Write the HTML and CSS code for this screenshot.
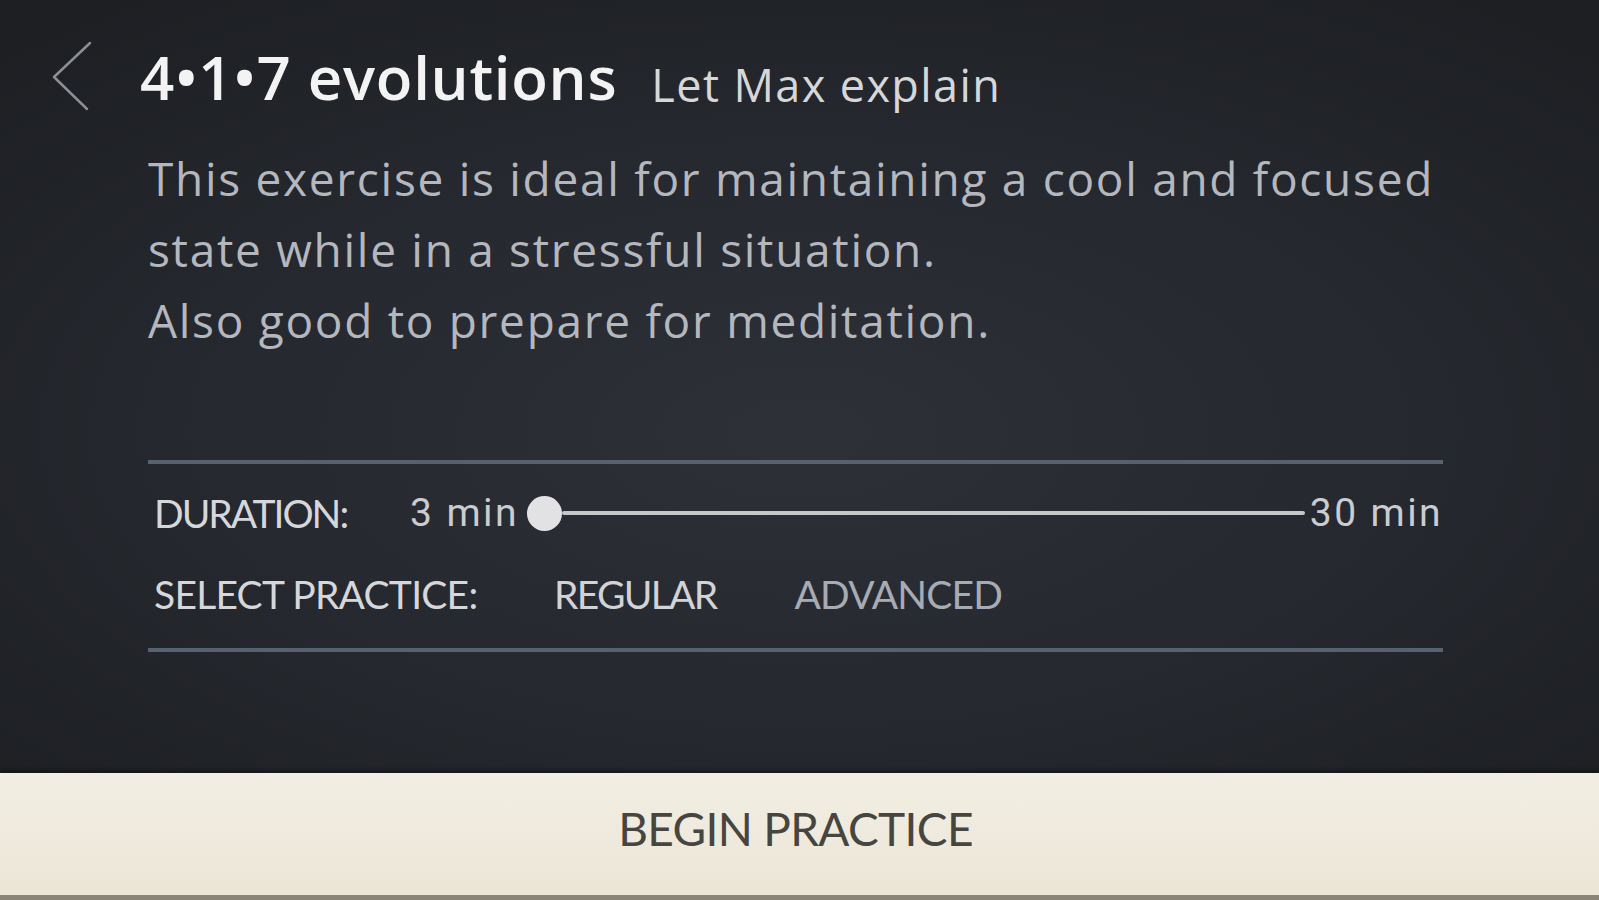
FILE: index.html
```html
<!DOCTYPE html>
<html lang="en">
<head>
<meta charset="utf-8">
<title>4•1•7 evolutions</title>
<link rel="stylesheet" href="styles.css">
</head>
<body>
<div class="screen">
  <header class="header">
    <svg class="back" viewBox="0 0 40 70" width="40" height="70" aria-label="Back">
      <polyline points="38,2 2,36 35,68" fill="none" stroke="#8b8e95" stroke-width="2.5" stroke-linecap="round" stroke-linejoin="round"/>
    </svg>
    <div class="titles">
      <h1 class="title">4•1•7 evolutions</h1>
      <span class="subtitle">Let Max explain</span>
    </div>
  </header>
  <main class="content">
    <p class="desc">This exercise is ideal for maintaining a cool and focused<br>state while in a stressful situation.<br>Also good to prepare for meditation.</p>
    <section class="settings">
      <div class="row">
        <span class="label label-duration">DURATION:</span>
        <span class="num">3 min</span>
        <div class="slider"><span class="knob"></span><span class="track"></span></div>
        <span class="num num-end">30 min</span>
      </div>
      <div class="row row-practice">
        <span class="label label-practice">SELECT PRACTICE:</span>
        <span class="opt opt-active">REGULAR</span>
        <span class="opt">ADVANCED</span>
      </div>
    </section>
  </main>
  <button class="begin"><span class="begin-text">BEGIN PRACTICE</span></button>
</div>
</body>
</html>
```

FILE: styles.css
```css
html, body {
  margin: 0;
  padding: 0;
}
body {
  width: 1599px;
  height: 900px;
  overflow: hidden;
  background: radial-gradient(ellipse 70% 60% at 50% 48%, #2d3037 0%, #25282e 55%, #1d1f23 100%);
  font-family: "Open Sans", "Liberation Sans", sans-serif;
}
.screen {
  height: 900px;
  display: flex;
  flex-direction: column;
}
.header {
  display: flex;
  align-items: flex-start;
  padding: 47px 0 0 52px;
  height: 60px;
}
.back {
  display: block;
  margin-top: -6px;
  flex: 0 0 auto;
}
.titles {
  display: flex;
  align-items: baseline;
  margin-left: 48px;
}
.title {
  margin: 0;
  font-family: "Open Sans", sans-serif;
  font-weight: 600;
  font-size: 60px;
  line-height: 60px;
  color: #f3f3f4;
  letter-spacing: 0.7px;
}
.subtitle {
  margin-left: 34px;
  font-family: "Open Sans", sans-serif;
  font-size: 45px;
  line-height: 60px;
  color: #d6d7d9;
  letter-spacing: 1.4px;
  position: relative;
  top: 2px;
}
.content {
  padding-left: 148px;
  width: 1295px;
}
.desc {
  margin: 36px 0 0 0;
  font-family: "Open Sans", sans-serif;
  font-size: 46px;
  line-height: 71px;
  color: #b4b7be;
  letter-spacing: 1.7px;
}
.settings {
  margin-top: 104px;
  border-top: 4px solid #58616f;
  border-bottom: 4px solid #58616f;
  padding: 29px 0 34px 6px;
  display: flex;
  flex-direction: column;
  gap: 41px;
}
.row {
  display: flex;
  align-items: center;
  height: 40px;
}
.label {
  font-family: "Lato", sans-serif;
  font-size: 39px;
  line-height: 40px;
  color: #d6d7da;
  flex: 0 0 auto;
}
.label-duration { width: 256px; letter-spacing: -2px; }
.label-practice { width: 400px; letter-spacing: -0.75px; }
.num {
  font-family: "Roboto", sans-serif;
  font-size: 39px;
  line-height: 40px;
  color: #cbccd0;
  letter-spacing: 2.4px;
}
.slider {
  flex: 1;
  display: flex;
  align-items: center;
  margin-left: 8px;
  margin-right: 5px;
}
.knob {
  width: 35px;
  height: 35px;
  border-radius: 50%;
  background: #e2e2e5;
  flex: 0 0 auto;
}
.track {
  flex: 1;
  height: 4px;
  background: #c6c7c9;
  border-radius: 2px;
}
.opt {
  font-family: "Lato", sans-serif;
  font-size: 39px;
  line-height: 40px;
  color: #d2d3d6;
  letter-spacing: -1.7px;
  margin-right: 78px;
}
.opt + .opt {
  color: #a7abb3;
  letter-spacing: -0.8px;
}
.begin {
  margin-top: auto;
  height: 127px;
  border: 0;
  border-bottom: 5px solid #8a8576;
  background: linear-gradient(#f2eee3, #ece6d7);
  box-shadow: 0 -3px 4px rgba(0,0,0,0.35);
  font-family: "Lato", sans-serif;
  font-size: 46px;
  color: #47453f;
  letter-spacing: -0.65px;
  padding: 0 8px 12px 0;
  width: 100%;
}
.begin-text {
  display: inline-block;
}
```
